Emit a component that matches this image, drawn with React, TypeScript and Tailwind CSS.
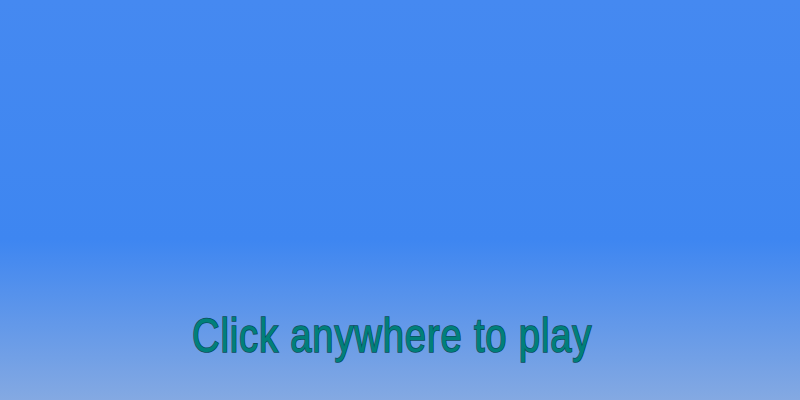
export default function App() {
  return (
    <div className="w-[800px] h-[400px] overflow-hidden bg-[linear-gradient(to_bottom,#4589f1_0%,#3e86f1_60%,#84a9e2_100%)] flex flex-col items-center justify-start pt-[308px]">
      <div
        className="mr-[15px] text-[48px] leading-[56px] tracking-[1px] text-[#00807a] [font-family:'Liberation_Sans',sans-serif] [-webkit-text-stroke:1.6px_#0b4c5c] [paint-order:stroke_fill] scale-x-[0.797] whitespace-nowrap"
      >
        Click anywhere to play
      </div>
    </div>
  );
}
